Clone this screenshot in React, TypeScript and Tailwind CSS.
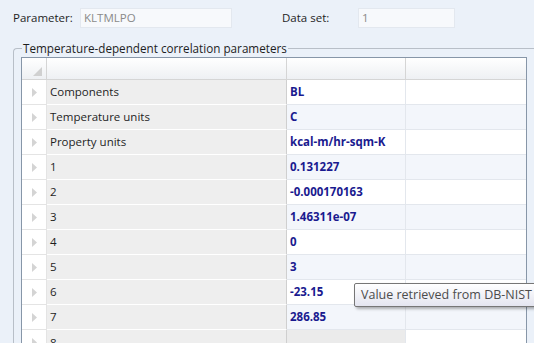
import React from "react";

const rows: { name: string; value: string }[] = [
  { name: "Components", value: "BL" },
  { name: "Temperature units", value: "C" },
  { name: "Property units", value: "kcal-m/hr-sqm-K" },
  { name: "1", value: "0.131227" },
  { name: "2", value: "-0.000170163" },
  { name: "3", value: "1.46311e-07" },
  { name: "4", value: "0" },
  { name: "5", value: "3" },
  { name: "6", value: "-23.15" },
  { name: "7", value: "286.85" },
];

function Arrow() {
  return (
    <svg width="5" height="9" viewBox="0 0 5 9">
      <path d="M0 0 L5 4.5 L0 9 Z" fill="#d4d4d4" />
    </svg>
  );
}

export default function App() {
  return (
    <div
      className="w-[534px] h-[343px] overflow-hidden bg-[#ebf1f9] text-[11.5px] text-[#1e1e1e] relative"
      style={{ fontFamily: '"Open Sans", "Noto Sans", sans-serif' }}
    >
      <div className="flex items-center h-[20px] mt-[8px]">
        <span className="ml-[13px] w-[67px]">Parameter:</span>
        <div className="w-[152px] h-[20px] bg-[#f7f9fc] border border-[#e3e8ef] text-[#8a8a8a] pl-[3px] leading-[18px]">
          KLTMLPO
        </div>
        <span className="ml-[50px] w-[76px]">Data set:</span>
        <div className="w-[97px] h-[20px] bg-[#f7f9fc] border border-[#e3e8ef] text-[#8a8a8a] pl-[3px] leading-[18px]">
          1
        </div>
      </div>

      <fieldset className="ml-[13px] mt-[13px] border-t border-l border-[#b8bfc8] rounded-tl-[4px] pl-[7px] pr-0 pb-0 h-[400px]">
        <legend className="ml-[1px] px-[1px] leading-[14px] text-[11.7px]">
          Temperature-dependent correlation parameters
        </legend>
        <div className="mt-[2px] w-[506px] border border-[#8796a8] bg-white">
          <div className="flex h-[22px] border-b border-[#d5d5d5] bg-gradient-to-b from-white to-[#eef0f3]">
            <div className="w-[25px] border-r border-[#d5d5d5] flex items-end justify-end pr-[4px] pb-[3px]">
              <svg width="9" height="9" viewBox="0 0 9 9">
                <path d="M9 0 L9 9 L0 9 Z" fill="#d0d0d0" />
              </svg>
            </div>
            <div className="w-[240px] border-r border-[#d5d5d5]" />
            <div className="w-[119px] border-r border-[#d5d5d5]" />
            <div className="flex-1" />
          </div>
          {rows.map((r, i) => (
            <div key={i} className="flex h-[25px]">
              <div className="w-[25px] border-r border-b border-[#e4e4e4] bg-white flex items-center pl-[10px]">
                <Arrow />
              </div>
              <div className="w-[240px] border-r border-[#cfcfcf] border-b border-b-white bg-[#eeeeee] pl-[3px] flex items-center">
                {r.name}
              </div>
              <div
                className={`w-[119px] border-r border-b border-[#e3e7ed] pl-[3px] flex items-center font-bold text-[#1a1a8f] ${
                  i % 2 === 0 ? "bg-white" : "bg-[#f3f6fb]"
                }`}
              >
                {r.value}
              </div>
              <div
                className={`flex-1 border-b border-[#e3e7ed] ${
                  i % 2 === 0 ? "bg-white" : "bg-[#f3f6fb]"
                }`}
              />
            </div>
          ))}
          <div className="flex h-[25px]">
            <div className="w-[25px] border-r border-[#e4e4e4] bg-white flex items-center pl-[10px]">
              <Arrow />
            </div>
            <div className="w-[240px] border-r border-[#cfcfcf] bg-[#eeeeee] pl-[3px] flex items-center">
              8
            </div>
            <div className="w-[119px] border-r border-[#e3e7ed] bg-[#ebebeb]" />
            <div className="flex-1 bg-white" />
          </div>
        </div>
      </fieldset>

      <div className="absolute left-[354px] top-[283px] w-[200px] h-[24px] border border-[#767676] rounded-[2px] bg-gradient-to-b from-white to-[#e4e5f0] shadow-[2px_2px_3px_rgba(0,0,0,0.3)] pl-[6px] leading-[22px] text-[12.5px] text-[#4c4c4c] whitespace-nowrap">
        Value retrieved from DB-NIST
      </div>
    </div>
  );
}
